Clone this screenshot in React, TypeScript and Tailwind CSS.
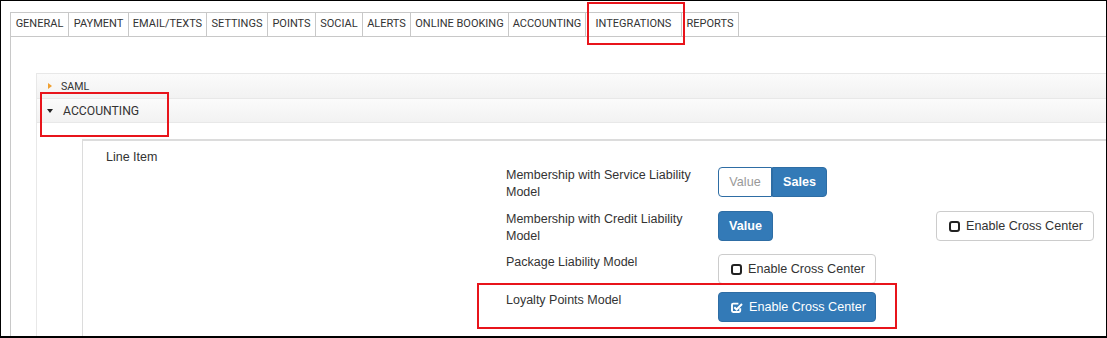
import React from "react";

const tabs: [string, number][] = [
  ["GENERAL", 58],
  ["PAYMENT", 60],
  ["EMAIL/TEXTS", 78],
  ["SETTINGS", 61],
  ["POINTS", 48],
  ["SOCIAL", 47],
  ["ALERTS", 48],
  ["ONLINE BOOKING", 98],
  ["ACCOUNTING", 77],
  ["INTEGRATIONS", 96],
  ["REPORTS", 58],
];

function SquareIcon() {
  return (
    <svg width="11" height="11" viewBox="0 0 11 11" className="shrink-0">
      <rect x="1" y="1" width="9" height="9" rx="2" fill="none" stroke="#222" strokeWidth="2" />
    </svg>
  );
}

function CheckSquareIcon() {
  return (
    <svg width="12" height="11" viewBox="0 0 12 11" className="shrink-0">
      <path d="M9.2 6.2V8.8a1.2 1.2 0 0 1-1.2 1.2H2.2A1.2 1.2 0 0 1 1 8.8V2.8a1.2 1.2 0 0 1 1.2-1.2h5.2" fill="none" stroke="#fff" strokeWidth="1.9" />
      <path d="M3.3 5.2l2.3 2.3L11 2" fill="none" stroke="#fff" strokeWidth="2" />
    </svg>
  );
}

function CrossCenterBtn({ on }: { on?: boolean }) {
  return (
    <button
      className={
        on
          ? "flex h-[30px] w-[158px] items-center gap-[6px] whitespace-nowrap rounded-[4px] border border-[#2e6da4] bg-[#337ab7] pl-[12px] text-[12.6px] text-white"
          : "flex h-[30px] w-[158px] items-center gap-[6px] whitespace-nowrap rounded-[4px] border border-[#ccc] bg-white pl-[12px] text-[12.6px] text-[#333]"
      }
    >
      {on ? <CheckSquareIcon /> : <SquareIcon />}
      <span>Enable Cross Center</span>
    </button>
  );
}

export default function App() {
  return (
    <div className="relative flex h-[338px] w-[1107px] flex-col overflow-hidden border-t border-r border-l border-b-2 border-black bg-white font-['Liberation_Sans',Arial,sans-serif] text-[12.5px] text-[#333]">
      {/* tabs */}
      <div className="ml-[9px] mt-[11px] flex font-['Roboto',sans-serif] text-[11px] text-[#333]">
        {tabs.map(([t, w], i) => (
          <div
            key={t}
            style={{ width: w }}
            className={
              i === tabs.length - 1
                ? "flex h-[24px] items-center justify-center border-t border-l border-r border-[#c8c8c8]"
                : "flex h-[24px] items-center justify-center border-t border-l border-[#c8c8c8]"
            }
          >
            {t}
          </div>
        ))}
      </div>

      {/* tab panel */}
      <div className="ml-[9px] flex-1 border-t border-l border-[#c8c8c8] pt-[36px] pl-[25px]">
        <div className="h-full border-l border-[#e8e8e8]">
          <div className="flex h-[25px] items-center border-t border-[#e8e8e8] bg-gradient-to-b from-[#fbfbfb] to-[#f2f2f2] pl-[11px] font-['Roboto',sans-serif] text-[10.6px] text-[#333]">
            <span className="h-0 w-0 border-y-[3px] border-l-[4px] border-y-transparent border-l-[#f0a030]" />
            <span className="ml-[9px] mt-[1px]">SAML</span>
          </div>
          <div className="flex h-[24px] items-center border-t border-[#e8e8e8] bg-gradient-to-b from-[#fbfbfb] to-[#f2f2f2] pl-[10px] font-['Roboto',sans-serif] text-[12.2px] text-[#333]">
            <span className="h-0 w-0 border-x-[3px] border-t-[4px] border-x-transparent border-t-[#222]" />
            <span className="ml-[10px] mt-[1px]">ACCOUNTING</span>
          </div>
          <div className="h-full border-t border-[#e8e8e8] pt-[16px] pl-[45px]">
            <div className="h-full border-t-2 border-l border-[#dcdcdc] pt-[8px] pl-[23px]">
              <div className="leading-[17px]">Line Item</div>

              <div className="ml-[400px] mt-[1px] leading-[17px]">
                <div className="mb-[10px] flex items-start">
                  <div className="w-[212px]">Membership with Service Liability<br />Model</div>
                  <div className="flex h-[30px]">
                    <button className="w-[54px] rounded-l-[4px] border border-[#2e6da4] bg-white text-[12.6px] text-[#999]">Value</button>
                    <button className="w-[55px] rounded-r-[4px] border border-[#2e6da4] bg-[#337ab7] text-[12.6px] font-bold text-white">Sales</button>
                  </div>
                </div>

                <div className="mb-[9px] flex items-start">
                  <div className="w-[212px]">Membership with Credit Liability<br />Model</div>
                  <div className="w-[218px]">
                    <button className="h-[30px] w-[55px] rounded-[4px] border border-[#2e6da4] bg-[#337ab7] text-[12.6px] font-bold text-white">Value</button>
                  </div>
                  <CrossCenterBtn />
                </div>

                <div className="mb-[8px] flex items-start">
                  <div className="w-[212px]">Package Liability Model</div>
                  <CrossCenterBtn />
                </div>

                <div className="flex items-start">
                  <div className="w-[212px]">Loyalty Points Model</div>
                  <CrossCenterBtn on />
                </div>
              </div>
            </div>
          </div>
        </div>
      </div>

      {/* red annotation boxes */}
      <div className="absolute left-[586px] top-[1px] h-[43px] w-[98px] border-2 border-[#e8141b]" />
      <div className="absolute left-[39px] top-[91px] h-[45px] w-[129px] border-2 border-[#e8141b]" />
      <div className="absolute left-[476px] top-[282px] h-[46px] w-[420px] border-2 border-[#e8141b]" />
    </div>
  );
}
